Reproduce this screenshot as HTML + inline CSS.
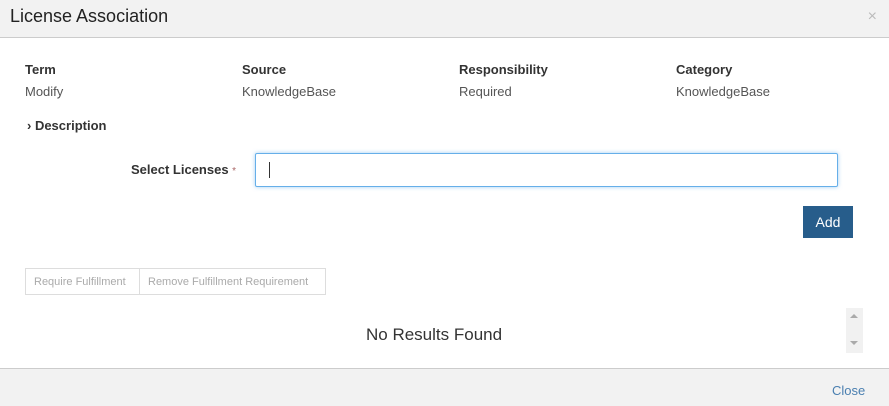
<!DOCTYPE html>
<html><head><meta charset="utf-8"><style>
body{margin:0;width:889px;height:405px;overflow:hidden;background:#fff;font-family:"Liberation Sans",sans-serif;color:#333;position:relative}
.hdr{position:absolute;left:0;top:0;width:889px;height:37px;background:#f2f2f2;border-bottom:1px solid #ccc}
.hdr .t{position:absolute;left:10px;top:6px;font-size:18px;color:#222}
.hdr .x{position:absolute;right:12px;top:8px;font-size:16px;color:#bbb}
.a{position:absolute;font-size:13px}
.b{font-weight:bold;color:#333}
.v{color:#555}
.inp{position:absolute;left:255px;top:153px;width:581px;height:32px;border:1px solid #66afe9;box-shadow:0 0 4px rgba(102,175,233,.6);border-radius:2px}
.cur{position:absolute;left:13px;top:8px;width:1px;height:16px;background:#333}
.add{position:absolute;left:803px;top:206px;width:50px;height:32px;background:#275d8b;color:#fff;font-size:14px;text-align:center;line-height:32px}
.bg{position:absolute;top:268px;height:27px;border:1px solid #ddd;font-size:11px;color:#aaa;line-height:27px;padding:0 8px;box-sizing:border-box}
.sb{position:absolute;left:846px;top:308px;width:17px;height:45px;background:#f1f1f1}
.ftr{position:absolute;left:0;top:368px;width:889px;height:37px;background:#f2f2f2;border-top:1px solid #ccc}
</style></head><body>
<div class="hdr"><div class="t">License Association</div><div class="x">×</div></div>
<div class="a b" style="left:25px;top:62px">Term</div><div class="a v" style="left:25px;top:84px">Modify</div>
<div class="a b" style="left:242px;top:62px">Source</div><div class="a v" style="left:242px;top:84px">KnowledgeBase</div>
<div class="a b" style="left:459px;top:62px">Responsibility</div><div class="a v" style="left:459px;top:84px">Required</div>
<div class="a b" style="left:676px;top:62px">Category</div><div class="a v" style="left:676px;top:84px">KnowledgeBase</div>
<div class="a b" style="left:27px;top:118px">› Description</div>
<div class="a b" style="left:131px;top:162px">Select Licenses <span style="color:#a66;font-weight:normal;font-size:10px">*</span></div>
<div class="inp"><div class="cur"></div></div>
<div class="add">Add</div>
<div class="bg" style="left:25px;width:115px">Require Fulfillment</div>
<div class="bg" style="left:139px;width:187px">Remove Fulfillment Requirement</div>
<div class="a" style="left:366px;top:325px;font-size:17px;color:#333">No Results Found</div>
<div class="sb"><div style="position:absolute;left:4px;top:6px;border:4px solid transparent;border-bottom:4px solid #aaa;border-top:0"></div><div style="position:absolute;left:4px;top:33px;border:4px solid transparent;border-top:4px solid #aaa;border-bottom:0"></div></div>
<div class="ftr"><div class="a" style="left:832px;top:14px;color:#4a7fb0">Close</div></div>
</body></html>
